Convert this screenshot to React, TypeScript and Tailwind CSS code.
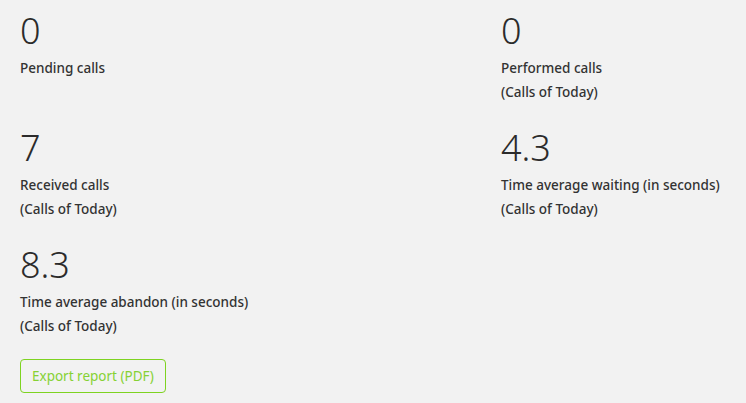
import React from 'react';

type Stat = {
  value: string;
  label: string;
  sub?: string;
};

const stats: Stat[] = [
  { value: '0', label: 'Pending calls' },
  { value: '0', label: 'Performed calls', sub: '(Calls of Today)' },
  { value: '7', label: 'Received calls', sub: '(Calls of Today)' },
  { value: '4.3', label: 'Time average waiting (in seconds)', sub: '(Calls of Today)' },
  { value: '8.3', label: 'Time average abandon (in seconds)', sub: '(Calls of Today)' },
];

const StatCell: React.FC<{ stat: Stat }> = ({ stat }) => (
  <div className="h-[117px]">
    <div className="text-[36px] leading-[50px] font-light text-[#2b2b2b]">{stat.value}</div>
    <div className="text-[13.5px] leading-[24px] font-medium text-[#333]">{stat.label}</div>
    {stat.sub && <div className="text-[13.5px] leading-[24px] font-medium text-[#333]">{stat.sub}</div>}
  </div>
);

export default function App() {
  return (
    <div
      className="min-h-[403px] w-full bg-[#f2f2f2] px-5 pt-[6px]"
      style={{ fontFamily: '"Noto Sans", "Open Sans", sans-serif' }}
    >
      <div className="grid grid-cols-[481px_1fr]">
        {stats.map((s, i) => (
          <StatCell key={i} stat={s} />
        ))}
      </div>
      <button
        type="button"
        className="mt-[2px] h-[34px] rounded-[4px] border border-[#7ed321] px-[11px] text-[13.5px] text-[#86d134]"
      >
        Export report (PDF)
      </button>
    </div>
  );
}
